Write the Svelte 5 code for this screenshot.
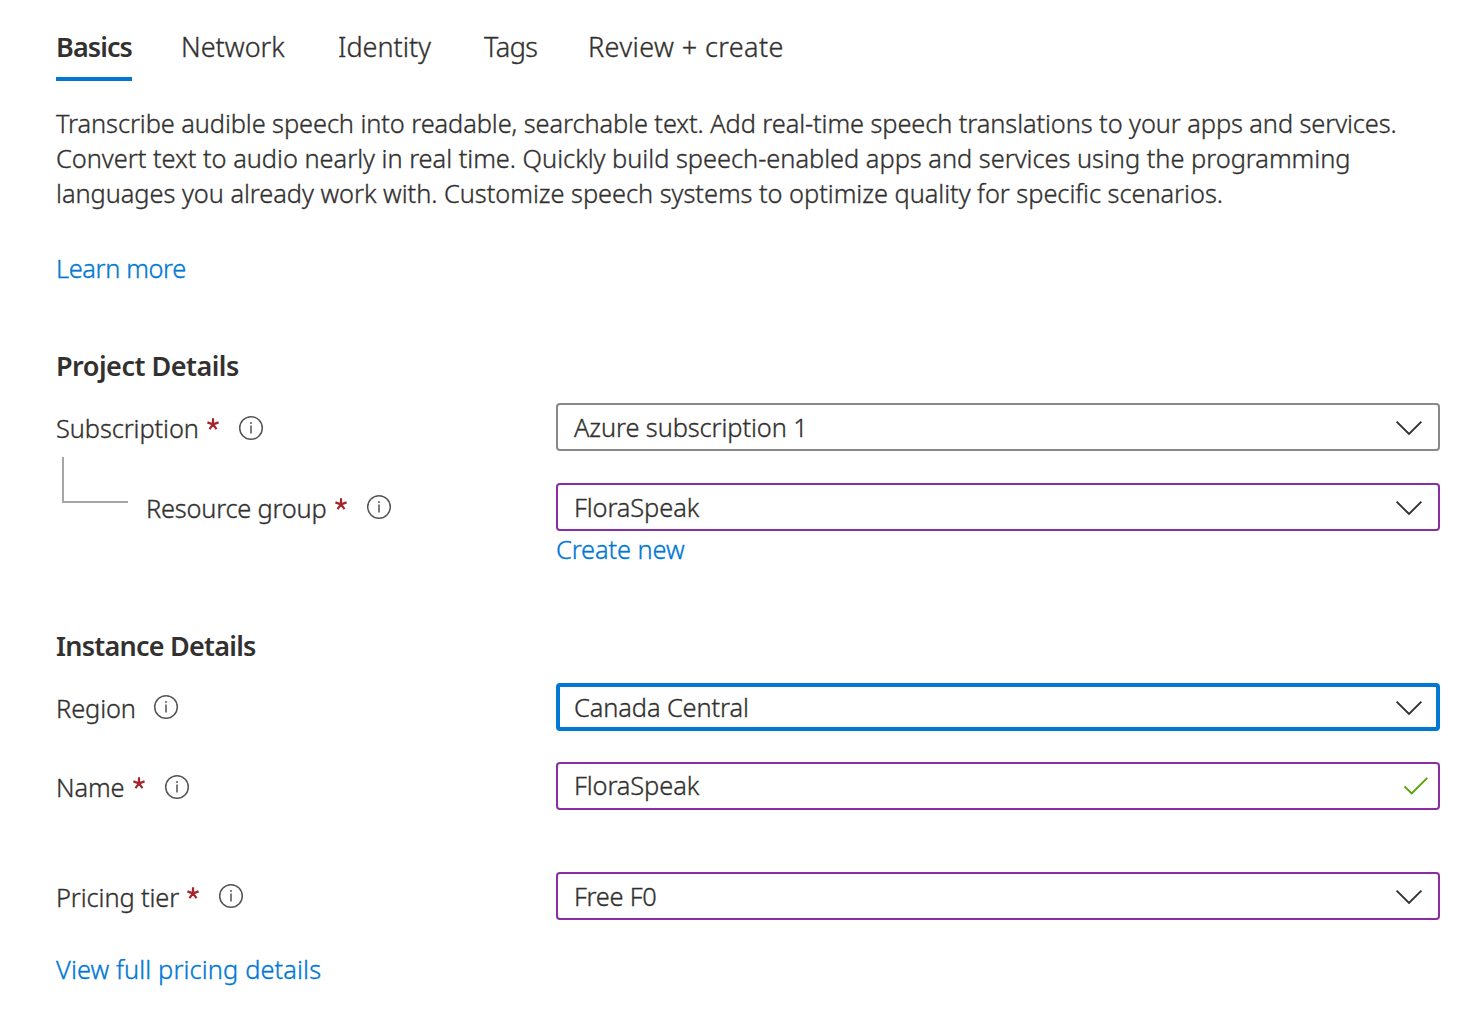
<script>
  const tabs = [
    { id: 'basics', label: 'Basics' },
    { id: 'network', label: 'Network' },
    { id: 'identity', label: 'Identity' },
    { id: 'tags', label: 'Tags' },
    { id: 'review', label: 'Review + create' },
  ];
  let active = $state('basics');
</script>

{#snippet info()}
  <svg class="info" viewBox="0 0 26 26" width="26" height="26" aria-hidden="true">
    <circle cx="13" cy="13" r="11.3" fill="none" stroke="#555" stroke-width="1.5" />
    <path d="M13 10.6v8" stroke="#666" stroke-width="1.7" />
    <circle cx="13" cy="8" r="1.1" fill="#666" />
  </svg>
{/snippet}

{#snippet star()}
  <svg class="star" viewBox="0 0 12 12" width="12" height="12" aria-hidden="true">
    <path d="M6 6.4V0.2M6 6.4L0.4 4.4M6 6.4L11.6 4.4M6 6.4L2.5 11.2M6 6.4L9.5 11.2" stroke="#a4262c" stroke-width="2.2" fill="none" />
  </svg>
{/snippet}

{#snippet chevron()}
  <svg class="chevron" viewBox="0 0 28 16" width="28" height="16" aria-hidden="true">
    <path d="M1.6 1.6L14 14L26.4 1.6" fill="none" stroke="#323130" stroke-width="1.9" />
  </svg>
{/snippet}

<main>
  <nav>
    {#each tabs as tab}
      <button class="tab {tab.id}" class:active={active === tab.id} onclick={() => (active = tab.id)}>{tab.label}</button>
    {/each}
  </nav>

  <p class="intro">
    <span class="l1">Transcribe audible speech into readable, searchable text. Add real-time speech translations to your apps and services.</span><br />
    <span class="l2">Convert text to audio nearly in real time. Quickly build speech-enabled apps and services using the programming</span><br />
    <span class="l3">languages you already work with. Customize speech systems to optimize quality for specific scenarios.</span>
  </p>
  <a class="learn" href="#learn">Learn more</a>

  <h2>Project Details</h2>
  <div class="row subscription">
    <div class="label"><span>Subscription</span>{@render star()}{@render info()}</div>
    <div class="box neutral"><span>Azure subscription 1</span>{@render chevron()}</div>
  </div>
  <div class="row group">
    <div class="label nested"><i class="elbow"></i><span>Resource group</span>{@render star()}{@render info()}</div>
    <div class="box"><span>FloraSpeak</span>{@render chevron()}</div>
  </div>
  <a class="create" href="#create">Create new</a>

  <h2 class="instance">Instance Details</h2>
  <div class="row region">
    <div class="label"><span>Region</span>{@render info()}</div>
    <div class="box focused"><span>Canada Central</span>{@render chevron()}</div>
  </div>
  <div class="row name">
    <div class="label"><span>Name</span>{@render star()}{@render info()}</div>
    <div class="box input">
      <span>FloraSpeak</span>
      <svg class="check" viewBox="0 0 26 20" width="26" height="20" aria-hidden="true">
        <path d="M1.5 10.3L8.7 17.5L24.3 1.9" fill="none" stroke="#57a300" stroke-width="1.9" />
      </svg>
    </div>
  </div>
  <div class="row tier">
    <div class="label"><span>Pricing tier</span>{@render star()}{@render info()}</div>
    <div class="box"><span class="free">Free F0</span>{@render chevron()}</div>
  </div>
  <a class="pricing" href="#pricing">View full pricing details</a>
</main>

<style>
  :global(body) { background: #fff; }
  main {
    box-sizing: border-box;
    width: 1461px;
    height: 1015px;
    padding: 27px 21px 0 56px;
    overflow: hidden;
    color: #323130;
    font: 300 25.4px/35px "Noto Sans", "Open Sans", sans-serif;
    letter-spacing: -0.1px;
    -webkit-text-stroke: 0.35px currentColor;
    white-space: nowrap;
  }
  nav { display: flex; height: 54px; }
  .tab {
    display: block;
    box-sizing: border-box;
    height: 54px;
    margin: 0;
    padding: 0 0 10px;
    border: 0;
    border-bottom: 4px solid transparent;
    background: none;
    color: inherit;
    font: 300 27px/40px "Noto Sans", "Open Sans", sans-serif;
    letter-spacing: 0;
    text-align: left;
  }
  .tab.active { border-color: #0078d4; font-weight: 600; -webkit-text-stroke: 0; }
  .basics { width: 76px; margin-right: 49px; letter-spacing: -0.9px; }
  .network { width: 106px; margin-right: 51px; }
  .identity { width: 95px; margin-right: 51px; }
  .tags { width: 55px; margin-right: 49px; letter-spacing: -0.5px; }
  .review { letter-spacing: 0.42px; }
  .intro { margin: 25px 0 0; }
  .l1 { letter-spacing: -0.09px; }
  .l2 { letter-spacing: -0.02px; }
  .l3 { letter-spacing: -0.04px; }
  a { display: block; width: max-content; color: #0078d4; text-decoration: none; }
  .learn { margin-top: 40px; letter-spacing: -0.38px; }
  h2 {
    margin: 60px 0 0;
    font-size: 27px;
    font-weight: 600;
    line-height: 40px;
    letter-spacing: -0.5px;
    -webkit-text-stroke: 0;
  }
  .row { display: grid; grid-template-columns: 500px 884px; height: 48px; }
  h2 + .row { margin-top: 17px; }
  .label { display: flex; align-items: center; padding-top: 2px; height: 48px; box-sizing: border-box; }
  .star { margin: -8px 0 0 8px; }
  .group .star, .name .star { margin-left: 9px; }
  .info { margin: -3px 0 0 19px; }
  .subscription .info, .name .info { margin-top: -1px; }
  .region .info { margin-left: 17px; }
  .box {
    box-sizing: border-box;
    display: flex;
    align-items: center;
    justify-content: space-between;
    height: 48px;
    padding: 0 15px 0 16px;
    border: 2px solid #8a2da5;
    border-radius: 4px;
  }
  .chevron { margin-top: 2px; }
  .neutral { border-color: #8a8886; }
  .focused { padding: 0 13px 0 14px; border: 4px solid #0078d4; }
  .group { margin-top: 32px; }
  .group .label span { letter-spacing: -0.22px; }
  .elbow {
    box-sizing: border-box;
    align-self: flex-start;
    width: 66px;
    height: 46px;
    margin: -28px 18px 0 6px;
    border: solid #a6a6a6;
    border-width: 0 0 2px 2px;
  }
  .free { letter-spacing: -0.25px; }
  .create { margin: 1px 0 0 500px; }
  .instance { margin-top: 59px; letter-spacing: -0.76px; }
  .name { margin-top: 31px; }
  .input { padding-right: 9px; }
  .input span { margin-top: -2px; }
  .tier { margin-top: 62px; }
  .pricing { margin-top: 32px; letter-spacing: 0.12px; }
</style>
